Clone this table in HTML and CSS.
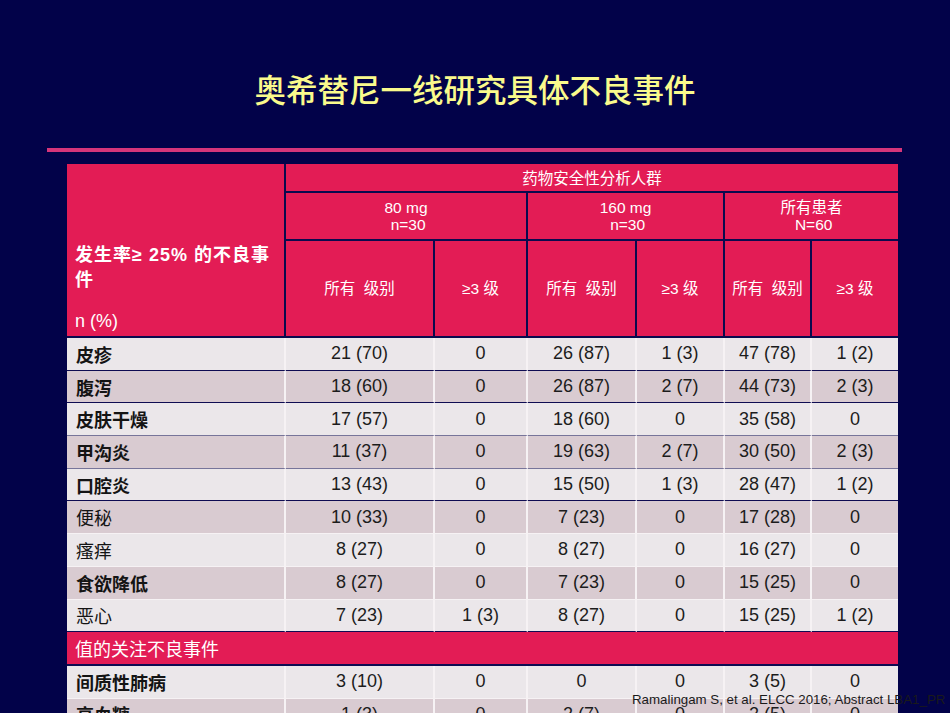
FILE: index.html
```html
<!DOCTYPE html>
<html lang="zh-CN">
<head>
<meta charset="utf-8">
<title>奥希替尼一线研究具体不良事件</title>
<link rel="stylesheet" href="styles.css">
</head>
<body>
<div class="slide">
  <h1 class="title">奥希替尼一线研究具体不良事件</h1>
  <div class="rule"></div>
  <table class="ae">
    <colgroup>
      <col class="c1"><col class="c2"><col class="c3"><col class="c4"><col class="c5"><col class="c6"><col class="c7">
    </colgroup>
    <thead>
      <tr class="h1">
        <th rowspan="3" class="corner">
          <div class="corner-in">
            <span class="corner-title">发生率≥ 25% 的不良事件</span>
            <span class="corner-unit">n (%)</span>
          </div>
        </th>
        <th colspan="6" class="grp">药物安全性分析人群</th>
      </tr>
      <tr class="h2">
        <th colspan="2">80 mg<br>&nbsp;n=30</th>
        <th colspan="2">160 mg<br>&nbsp;n=30</th>
        <th colspan="2">所有患者<br>&nbsp;N=60</th>
      </tr>
      <tr class="h3">
        <th>所有&nbsp; 级别</th>
        <th>≥3 级</th>
        <th>所有&nbsp; 级别</th>
        <th>≥3 级</th>
        <th>所有&nbsp; 级别</th>
        <th>≥3 级</th>
      </tr>
    </thead>
    <tbody>
      <tr class="lt bn"><td class="lbl b">皮疹</td><td>21 (70)</td><td>0</td><td>26 (87)</td><td>1 (3)</td><td>47 (78)</td><td>1 (2)</td></tr>
      <tr class="dk bn"><td class="lbl b">腹泻</td><td>18 (60)</td><td>0</td><td>26 (87)</td><td>2 (7)</td><td>44 (73)</td><td>2 (3)</td></tr>
      <tr class="lt bg"><td class="lbl b">皮肤干燥</td><td>17 (57)</td><td>0</td><td>18 (60)</td><td>0</td><td>35 (58)</td><td>0</td></tr>
      <tr class="dk bg"><td class="lbl b">甲沟炎</td><td>11 (37)</td><td>0</td><td>19 (63)</td><td>2 (7)</td><td>30 (50)</td><td>2 (3)</td></tr>
      <tr class="lt bn"><td class="lbl b">口腔炎</td><td>13 (43)</td><td>0</td><td>15 (50)</td><td>1 (3)</td><td>28 (47)</td><td>1 (2)</td></tr>
      <tr class="dk"><td class="lbl">便秘</td><td>10 (33)</td><td>0</td><td>7 (23)</td><td>0</td><td>17 (28)</td><td>0</td></tr>
      <tr class="lt"><td class="lbl">瘙痒</td><td>8 (27)</td><td>0</td><td>8 (27)</td><td>0</td><td>16 (27)</td><td>0</td></tr>
      <tr class="dk"><td class="lbl b">食欲降低</td><td>8 (27)</td><td>0</td><td>7 (23)</td><td>0</td><td>15 (25)</td><td>0</td></tr>
      <tr class="lt bn"><td class="lbl">恶心</td><td>7 (23)</td><td>1 (3)</td><td>8 (27)</td><td>0</td><td>15 (25)</td><td>1 (2)</td></tr>
      <tr class="sec"><td colspan="7">值的关注不良事件</td></tr>
      <tr class="lt"><td class="lbl b">间质性肺病</td><td>3 (10)</td><td>0</td><td>0</td><td>0</td><td>3 (5)</td><td>0</td></tr>
      <tr class="dk"><td class="lbl b">高血糖</td><td>1 (3)</td><td>0</td><td>2 (7)</td><td>0</td><td>2 (5)</td><td>0</td></tr>
    </tbody>
  </table>
  <p class="cite">Ramalingam S, et al. ELCC 2016; Abstract LBA1_PR</p>
</div>
</body>
</html>
```

FILE: styles.css
```css
html, body {
  margin: 0;
  padding: 0;
  background: #020249;
}

.slide {
  position: relative;
  width: 950px;
  height: 713px;
  overflow: hidden;
  background: #020249;
  font-family: "Liberation Sans", Arial, "Noto Sans CJK SC", sans-serif;
}

.title {
  margin: 0;
  padding-top: 68px;
  height: 40px;
  line-height: 40px;
  text-align: center;
  font-family: "Noto Sans CJK SC", sans-serif;
  font-weight: 500;
  font-size: 31.5px;
  color: #fafa8c;
}

.rule {
  margin: 40px 0 0 47px;
  width: 855px;
  height: 4px;
  background: #d6357a;
}

.ae {
  margin: 12px 0 0 67px;
  width: 831px;
  table-layout: fixed;
  border-collapse: separate;
  border-spacing: 0;
}

.c1 { width: 219px; }
.c2 { width: 149px; }
.c3 { width: 93px; }
.c4 { width: 109px; }
.c5 { width: 88px; }
.c6 { width: 87px; }
.c7 { width: 86px; }

.ae th {
  background: #e31c55;
  color: #ffffff;
  font-weight: 400;
  font-size: 15.5px;
  line-height: 17px;
  padding: 0;
  text-align: center;
  border-right: 2px solid #0a0a4e;
  border-bottom: 2px solid #0a0a4e;
  font-family: "Liberation Sans", Arial, "Noto Sans CJK SC", sans-serif;
}

.ae th:last-child { border-right: none; }
.ae .h1 th.corner { border-right: 2px solid #0a0a4e; }

.h1 th { height: 27px; }
.h2 th { height: 46px; }
.h3 th { height: 95px; }

.corner {
  vertical-align: bottom;
  text-align: left !important;
}

.corner-in {
  display: flex;
  flex-direction: column;
  justify-content: space-between;
  height: 162px;
  padding: 0 12px 4px 8px;
  box-sizing: border-box;
}

.corner-title {
  margin-top: 69px;
  font-family: "Liberation Sans", Arial, "Noto Sans CJK SC", sans-serif;
  font-weight: 700;
  font-size: 18px;
  line-height: 25px;
  letter-spacing: 1px;
}

.corner-unit {
  font-family: "Liberation Sans", Arial, sans-serif;
  font-size: 18px;
  line-height: 22px;
}

.grp {
  font-family: "Noto Sans CJK SC", sans-serif !important;
}

.ae td {
  height: 31.7px;
  padding: 0;
  text-align: center;
  font-size: 18px;
  color: #1c1c1c;
  border-right: 2px solid #f6f2f4;
  border-bottom: 1px solid #f6f2f4;
}

.ae td:last-child { border-right: none; }

.lt td { background: #ebe7ea; }
.dk td { background: #d9cbd1; }

.bn td { border-bottom-color: #0e0c52; }
.bg td { border-bottom-color: #77759a; }

.ae td.lbl {
  text-align: left;
  padding-left: 9px;
  font-family: "Noto Sans CJK SC", sans-serif;
  font-size: 18px;
  color: #141414;
}

.ae td.b { font-weight: 700; }

.sec td {
  background: #e31c55;
  color: #ffffff;
  text-align: left;
  padding-left: 8px;
  font-family: "Noto Sans CJK SC", sans-serif;
  font-size: 18px;
  border-bottom: 2px solid #0e0c52;
  border-right: none;
}

.cite {
  position: absolute;
  left: 632px;
  top: 692px;
  margin: 0;
  font-size: 13.3px;
  line-height: 16px;
  color: #1a1a1a;
  white-space: nowrap;
}
```
